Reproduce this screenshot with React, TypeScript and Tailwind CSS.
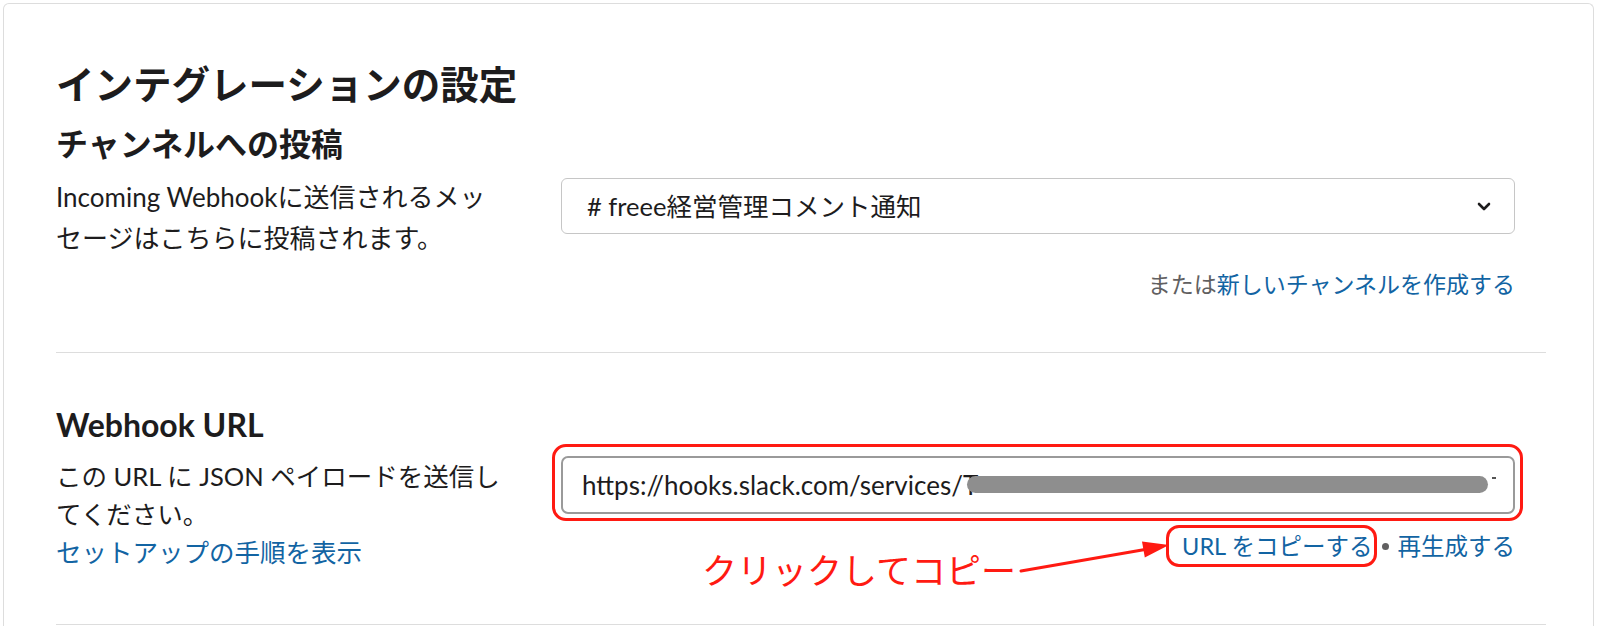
const font = "font-['Lato','Noto_Sans_CJK_JP',sans-serif]";

const Chevron = () => (
  <svg width="14" height="9" viewBox="0 0 14 9" fill="none">
    <path d="M2 2l5 5 5-5" stroke="#1d1c1d" strokeWidth="2.6" strokeLinecap="round" strokeLinejoin="round" />
  </svg>
);

const ArrowNote = () => (
  <svg width="160" height="42" viewBox="0 0 160 42" className="absolute left-[456px] top-[80px]">
    <line x1="4" y1="35" x2="128" y2="13.5" stroke="#ff1a12" strokeWidth="3" strokeLinecap="round" />
    <polygon points="152,9 127.8,21.6 125,5.4" fill="#ff1a12" />
  </svg>
);

const App = () => {
  return (
    <div className={`${font} h-[626px] w-full overflow-hidden bg-white text-[#1d1c1d]`}>
      <div className="ml-[3px] mt-[3px] w-[1591px] rounded-t-[6px] border border-b-0 border-[#dddddd] pl-[52px] pr-[47px] pt-[58px] pb-10">
        <h1 className="text-[38.5px] font-bold leading-[44px]">インテグレーションの設定</h1>

        {/* channel section */}
        <h2 className="mt-[18px] text-[32px] font-bold leading-[40px]">チャンネルへの投稿</h2>
        <div className="mt-3 flex">
          <div className="w-[505px] pt-[1px] text-[26px] leading-[41px]">
            Incoming Webhookに送信されるメッ
            <br />
            セージはこちらに投稿されます。
          </div>
          <div className="mr-[31px] flex-1 pt-[2px]">
            <div className="flex h-[56px] items-center justify-between rounded-[6px] border border-[#c6c6c6] pl-[25px] pr-[23px] text-[25.5px]">
              <span># freee経営管理コメント通知</span>
              <Chevron />
            </div>
            <div className="mt-[35px] text-right text-[23px] leading-[30px]">
              <span className="text-[#616061]">または</span>
              <span className="text-[#1264a3]">新しいチャンネルを作成する</span>
            </div>
          </div>
        </div>

        <div className="mt-[53px] border-t border-[#dddddd]" />

        {/* webhook url section */}
        <h2 className="mt-[52px] text-[32px] font-bold leading-[40px]">Webhook URL</h2>
        <div className="mt-[11px] flex">
          <div className="w-[505px] pt-[1px] text-[25.5px] leading-[38px]">
            この URL に JSON ペイロードを送信し
            <br />
            てください。
            <br />
            <span className="text-[#1264a3]">セットアップの手順を表示</span>
          </div>
          <div className="relative mr-[31px] flex-1">
            <div className="relative">
              <div className="flex h-[58px] items-center overflow-hidden rounded-[7px] border-2 border-[#9a9a9a] pl-[19px] text-[26px]">
                <span>https://hooks.slack.com/services/T</span>
              </div>
              <div className="absolute left-[406px] top-[20px] h-[17px] w-[521px] rounded-full bg-[#8e8e8e]" />
              <div className="absolute left-[931px] top-[21px] h-[2px] w-[4px] bg-[#555]" />
              <div className="pointer-events-none absolute -bottom-[7px] -left-[9px] -right-[8px] -top-[12px] rounded-[14px] border-[3px] border-[#ff1a12]" />
            </div>
            <div className="mt-[17px] flex items-center justify-end text-[23.5px] leading-[30px] text-[#1264a3]">
              <span className="relative">
                URL をコピーする
                <span className="pointer-events-none absolute -bottom-[6px] -left-[16px] -right-[4px] -top-[6px] rounded-[13px] border-[3px] border-[#ff1a12]" />
              </span>
              <span className="mx-[9px] h-[7px] w-[7px] rounded-full bg-[#616061]" />
              <span>再生成する</span>
            </div>
            <div className="absolute left-[141px] top-[94px] text-[35px] leading-[40px] text-[#ff1a12]">クリックしてコピー</div>
            <ArrowNote />
          </div>
        </div>

        <div className="mt-[53px] border-t border-[#dddddd]" />
      </div>
    </div>
  );
};

export default App;
